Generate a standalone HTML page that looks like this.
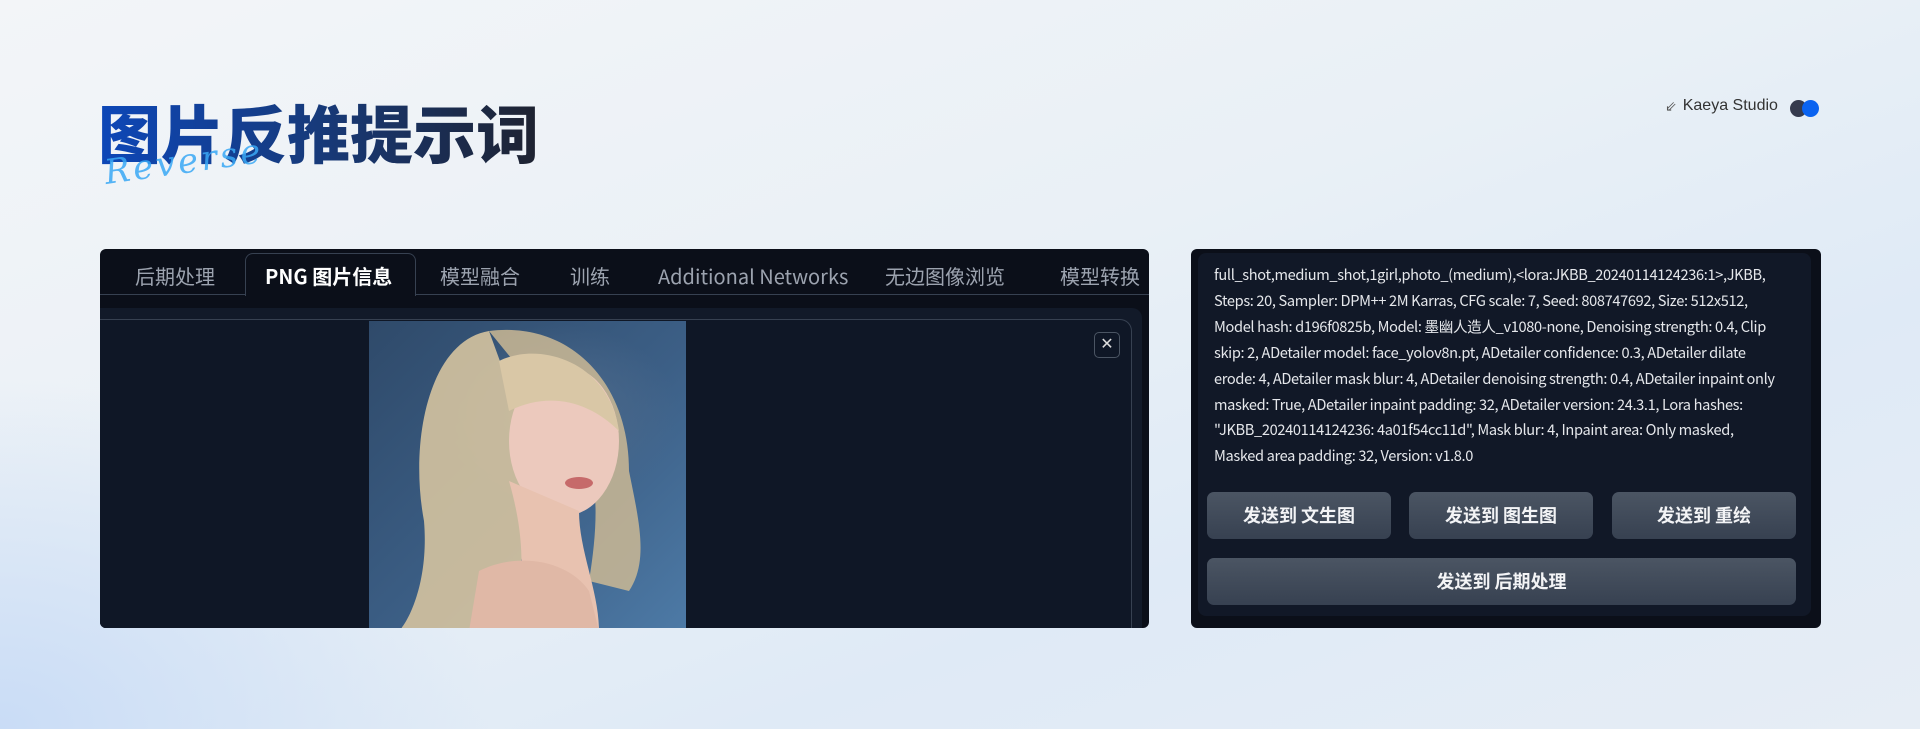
<!DOCTYPE html>
<html><head><meta charset="utf-8"><style>
*{margin:0;padding:0;box-sizing:border-box}
body{width:1920px;height:729px;overflow:hidden;font-family:"Liberation Sans","Noto Sans CJK SC",sans-serif;
background:linear-gradient(160deg,#f3f5f8 0%,#e9f0f6 45%,#dfeaf6 70%,#e6edf5 100%);position:relative}
.bgl{position:absolute;left:0;top:0;width:1920px;height:729px;background:radial-gradient(ellipse 700px 500px at 0% 100%,#c9dcf6 0%,rgba(201,220,246,0) 70%)}
.title{position:absolute;left:98px;top:92px;font-size:63px;font-weight:900;font-family:"Noto Sans CJK SC",sans-serif;
background:linear-gradient(90deg,#0d47b8 0%,#173a7a 50%,#1e2230 100%);-webkit-background-clip:text;color:transparent;line-height:80px}
.rev{position:absolute;left:104px;top:142px;font-family:"DejaVu Serif",serif;font-style:italic;font-size:34px;color:#3aa8f5;letter-spacing:3px;transform:rotate(-8deg);opacity:.85;font-weight:normal}
.brand{position:absolute;left:1665px;top:97px;font-size:16px;color:#333;display:flex;align-items:center;gap:6px}
.dots{position:absolute;left:1790px;top:100px}
.dots span{position:absolute;width:17px;height:17px;border-radius:50%}
.lp{position:absolute;left:100px;top:249px;width:1049px;height:379px;background:#0b0f19;border-radius:6px;overflow:hidden}
.tabs{position:absolute;left:0;top:0;width:100%;height:46px;border-bottom:1px solid #374151}
.tab{position:absolute;top:12px;font-size:20px;color:#9ca3af;font-family:"Noto Sans CJK SC",sans-serif}
.act{position:absolute;left:145px;top:4px;width:171px;height:43px;border:1px solid #374151;border-bottom:none;border-radius:8px 8px 0 0;background:#0b0f19}
.inner{position:absolute;left:0;top:59px;width:1042px;height:330px;background:#121a29;border-radius:0 10px 0 0}
.box{position:absolute;left:0;top:70px;width:1032px;height:320px;border:1px solid #374151;border-left:none;border-radius:0 12px 0 0;background:#0f1726}
.photo{position:absolute;left:269px;top:72px;width:317px;height:310px;overflow:hidden;
background:radial-gradient(ellipse 120px 90px at 60% 30%,#4e6b8c 0%,rgba(0,0,0,0) 100%),linear-gradient(135deg,#2f4a6a 0%,#3c5f86 55%,#4d7aa6 100%)}
.close{position:absolute;left:994px;top:83px;width:26px;height:26px;border:1px solid #4b5563;border-radius:5px;color:#ddd;font-size:16px;text-align:center;line-height:23px}
.rp{position:absolute;left:1191px;top:249px;width:630px;height:379px;background:#0b0f19;border-radius:6px;overflow:hidden}
.rin{position:absolute;left:7px;top:4px;width:613px;height:363px;background:#111827;border-radius:8px}
.txt{position:absolute;left:16px;top:9px;width:610px;font-size:14.6px;line-height:25.9px;color:#e5e7eb;font-family:"Noto Sans CJK SC",sans-serif;letter-spacing:-0.35px;white-space:nowrap}
.btn{position:absolute;height:47px;background:linear-gradient(#4b5563,#374151);border-radius:7px;color:#f3f4f6;font-weight:bold;font-size:18px;text-align:center;line-height:47px;font-family:"Noto Sans CJK SC",sans-serif}
</style></head><body>
<div class="bgl"></div>
<div class="title">图片反推提示词</div>
<div class="rev">Reverse</div>
<div class="brand"><span style="color:#555;font-size:14px">⇙</span><span>Kaeya Studio</span></div>
<div class="dots"><span style="left:0;background:#363b4e"></span><span style="left:12px;background:#0a63f0"></span></div>

<div class="lp">
<div class="inner"></div>
<div class="tabs"></div>
<div class="act"></div>
<div class="tab" style="left:35px">后期处理</div>
<div class="tab" style="left:165px;color:#fff;font-weight:bold">PNG 图片信息</div>
<div class="tab" style="left:340px">模型融合</div>
<div class="tab" style="left:470px">训练</div>
<div class="tab" style="left:558px">Additional Networks</div>
<div class="tab" style="left:785px">无边图像浏览</div>
<div class="tab" style="left:960px">模型转换</div>
<div class="box"></div>
<div class="photo">
<svg width="317" height="310" viewBox="0 0 317 310">
<path d="M120 10 C60 20 40 120 55 200 C60 260 40 300 30 310 L150 310 C140 250 170 200 160 120 Z" fill="#d5c3a0" opacity=".9"/>
<path d="M120 10 C200 0 260 60 260 150 C270 200 280 240 260 270 L220 260 C230 200 230 150 210 120 Z" fill="#cbb894" opacity=".85"/>
<ellipse cx="195" cy="120" rx="55" ry="75" fill="#ecc9bd"/>
<path d="M130 40 C170 20 240 40 250 110 C220 80 180 70 140 90 Z" fill="#d9c7a6"/>
<path d="M140 160 C160 230 150 260 150 310 L230 310 C230 270 210 230 210 190 Z" fill="#e8c2b0"/>
<ellipse cx="210" cy="162" rx="14" ry="6" fill="#c66a6a"/>
<path d="M110 250 C150 230 200 240 220 270 L230 310 L100 310 Z" fill="#e0b8a6"/>
</svg></div>
<div class="close">✕</div>
</div>

<div class="rp"><div class="rin">
<div class="txt">full_shot,medium_shot,1girl,photo_(medium),&lt;lora:JKBB_20240114124236:1&gt;,JKBB,<br>Steps: 20, Sampler: DPM++ 2M Karras, CFG scale: 7, Seed: 808747692, Size: 512x512,<br>Model hash: d196f0825b, Model: 墨幽人造人_v1080-none, Denoising strength: 0.4, Clip<br>skip: 2, ADetailer model: face_yolov8n.pt, ADetailer confidence: 0.3, ADetailer dilate<br>erode: 4, ADetailer mask blur: 4, ADetailer denoising strength: 0.4, ADetailer inpaint only<br>masked: True, ADetailer inpaint padding: 32, ADetailer version: 24.3.1, Lora hashes:<br>"JKBB_20240114124236: 4a01f54cc11d", Mask blur: 4, Inpaint area: Only masked,<br>Masked area padding: 32, Version: v1.8.0</div>
</div>
<div class="btn" style="left:16px;top:243px;width:184px">发送到 文生图</div>
<div class="btn" style="left:218px;top:243px;width:184px">发送到 图生图</div>
<div class="btn" style="left:421px;top:243px;width:184px">发送到 重绘</div>
<div class="btn" style="left:16px;top:309px;width:589px">发送到 后期处理</div>
</div>
</body></html>
